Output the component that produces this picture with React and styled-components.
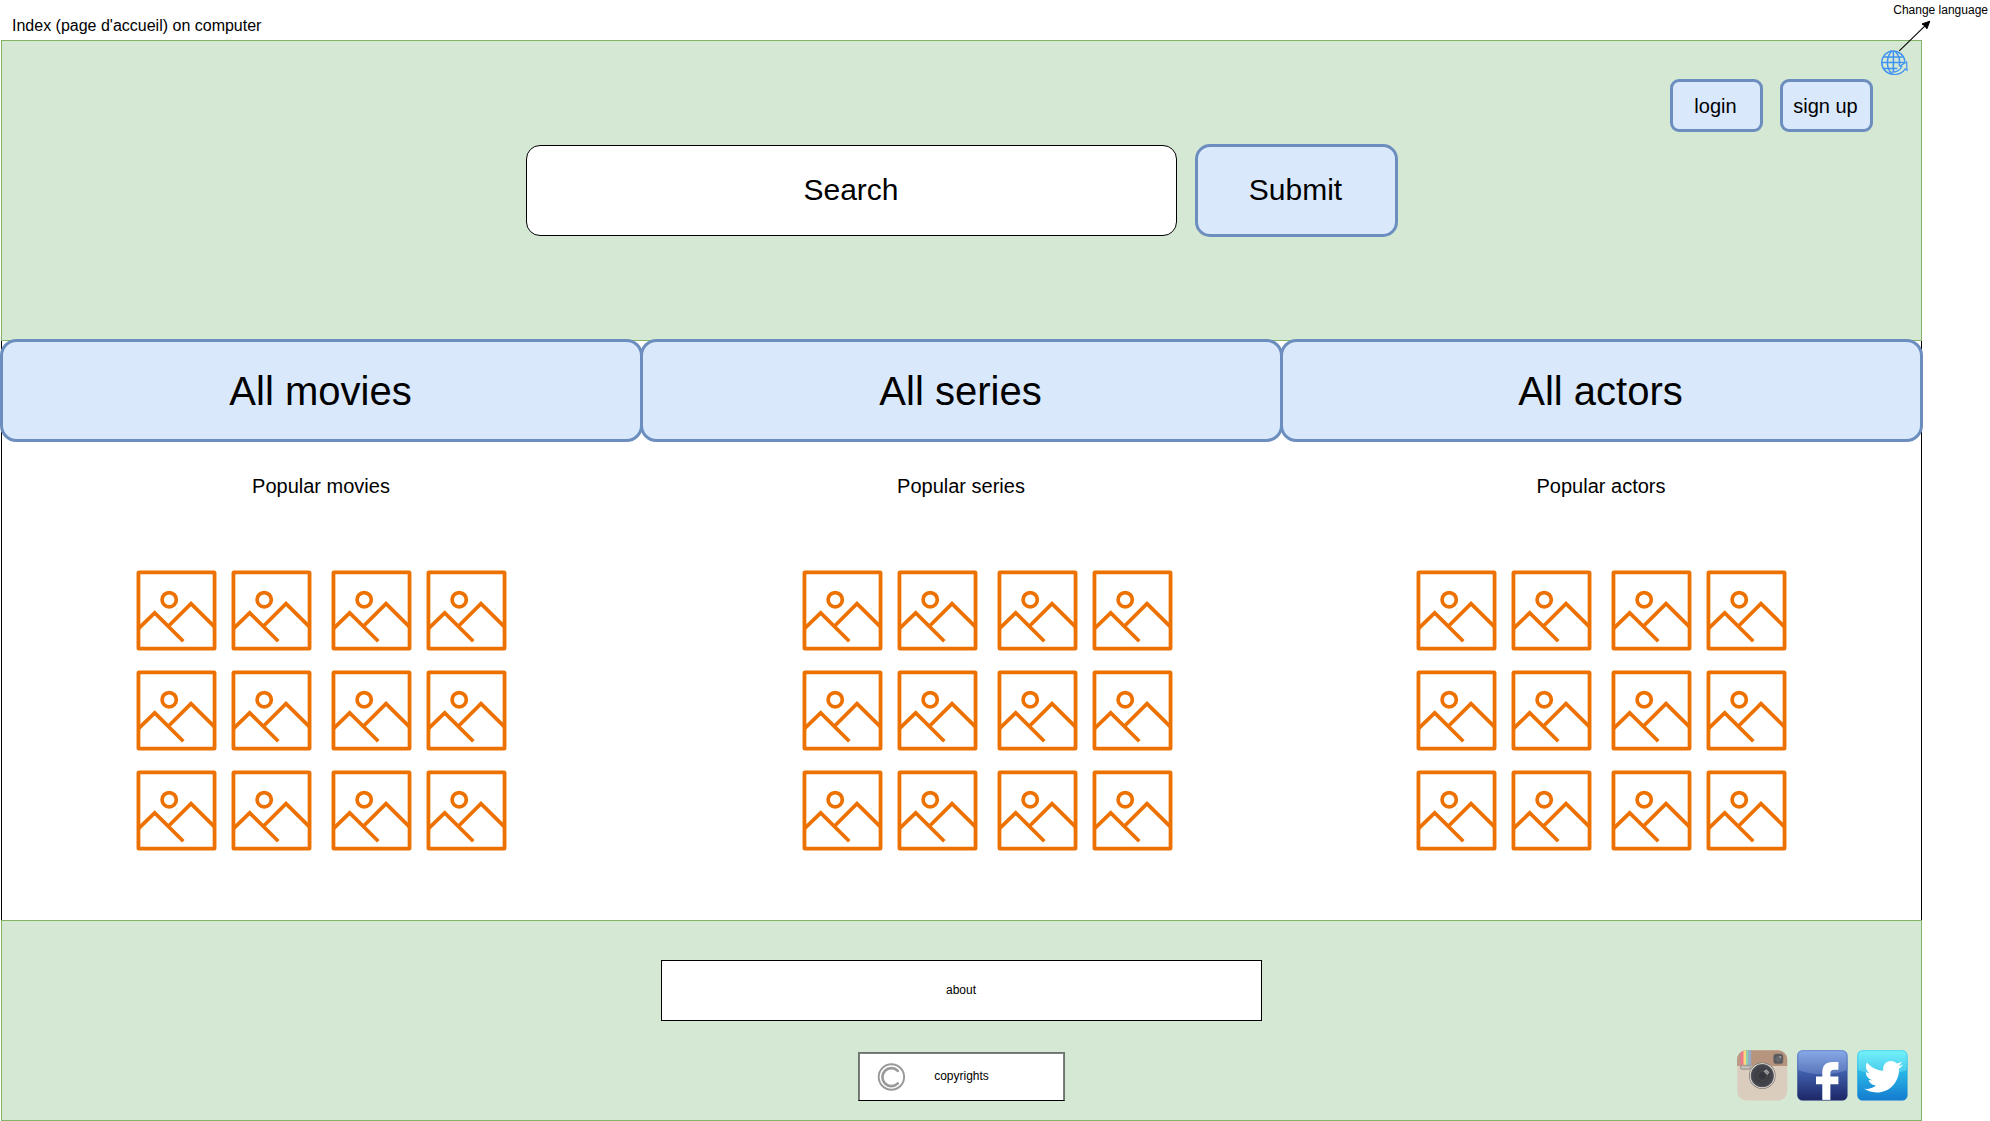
import React from "react";
import styled, { createGlobalStyle } from "styled-components";

const GlobalStyle = createGlobalStyle`
  *, *::before, *::after { box-sizing: border-box; }
  body {
    margin: 0;
    background: #ffffff;
    color: #000000;
    font-family: "Liberation Sans", Arial, Helvetica, sans-serif;
    overflow: hidden;
  }
  svg { display: block; flex: none; }
`;

const Page = styled.div`
  position: relative;
  width: 1990px;
  height: 1121px;
  overflow: hidden;
`;

const Caption = styled.div`
  display: flex;
  justify-content: space-between;
  height: 40px;
  padding: 0 2px 0 12px;
`;

const PageTitle = styled.div`
  padding-top: 16px;
  font-size: 16px;
  line-height: 20px;
`;

const Note = styled.div`
  padding-top: 3px;
  font-size: 12px;
  line-height: 14px;
`;

const NoteArrow = styled.svg`
  position: absolute;
  left: 1895px;
  top: 18px;
`;

const Band = styled.div`
  width: 1921px;
  height: ${(p) => p.$height}px;
  margin-left: 1px;
  display: flex;
  flex-direction: column;
  background: #d5e8d4;
  border: 1px solid #82b366;
`;

const LanguageRow = styled.div`
  display: flex;
  justify-content: flex-end;
  padding: 9px 13px 0 0;
`;

const AccountRow = styled.div`
  display: flex;
  justify-content: flex-end;
  gap: 17px;
  padding: 3px 48px 0 0;
`;

const SearchRow = styled.div`
  display: flex;
  align-items: center;
  gap: 18px;
  padding: 12px 0 0 524px;
`;

const Button = styled.button`
  display: flex;
  flex: none;
  align-items: center;
  justify-content: center;
  width: ${(p) => p.$width}px;
  height: ${(p) => p.$height}px;
  padding: 0 2px ${(p) => p.$lift || 0}px 0;
  border: 3px solid #6c8ebf;
  border-radius: ${(p) => p.$radius}px;
  background: #dae8fc;
  color: #000000;
  font-family: inherit;
  font-size: ${(p) => p.$size}px;
  line-height: 1.2;
`;

const SearchBox = styled.div`
  display: flex;
  align-items: center;
  justify-content: center;
  width: 651px;
  height: 91px;
  padding: 0 1px 2px 0;
  border: 1px solid #000000;
  border-radius: 14px;
  background: #ffffff;
  font-size: 30px;
`;

const Body = styled.div`
  display: flex;
  flex-direction: column;
  width: 1921px;
  height: 579px;
  margin-left: 1px;
  border: solid #000000;
  border-width: 0 1px;
`;

const Tabs = styled.div`
  display: flex;
  margin: -2px -2px 0;
  & > * + * { margin-left: -3px; }
`;

const Columns = styled.div`
  display: flex;
  margin-left: -1px;
`;

const Column = styled.div`
  flex: none;
  width: 640px;
  padding-top: 32px;
`;

const ColumnTitle = styled.div`
  text-align: center;
  font-size: 20px;
  line-height: 24px;
`;

const Gallery = styled.div`
  display: flex;
  flex-direction: column;
  gap: 19px;
  padding: 72px 0 0 ${(p) => p.$indent}px;
`;

const GalleryRow = styled.div`
  display: flex;
  gap: 19px;
`;

const Pair = styled.div`
  display: flex;
  gap: 14px;
`;

const FooterMain = styled.div`
  display: flex;
  justify-content: center;
  padding-top: 39px;
`;

const About = styled.div`
  display: flex;
  align-items: center;
  justify-content: center;
  width: 601px;
  height: 61px;
  padding: 0 1px 2px 0;
  border: 1px solid #000000;
  background: #ffffff;
  font-size: 12px;
`;

const FooterBottom = styled.div`
  display: grid;
  grid-template-columns: 1fr 207px 1fr;
  padding-top: 29px;
`;

const Copyright = styled.div`
  display: grid;
  grid-template-columns: 1fr auto 1fr;
  align-items: center;
  grid-column: 2;
  width: 207px;
  height: 49px;
  margin-top: 2px;
  border: 1px solid #6a746a;
  border-bottom-color: #000000;
  background: #ffffff;
  box-shadow: inset 0 1px #7f7f7f, inset 1px 0 #7f7f7f, inset -1px 0 #7f7f7f;
  font-size: 12px;
  & > svg { margin-left: 18px; }
  & > span { padding-bottom: 2px; }
`;

const Social = styled.div`
  display: flex;
  justify-content: flex-end;
  gap: 9px;
  padding-right: 13px;
`;

const PictureIcon = () => (
  <svg width="81" height="81" viewBox="-0.5 -0.5 81 81" fill="none" stroke="#ed7100">
    <rect x="1.95" y="1.95" width="76.1" height="76.1" rx="0.6" strokeWidth="3.8" />
    <circle cx="32.7" cy="29.2" r="7.1" strokeWidth="3.7" />
    <path d="M2.2 57.8 L18.2 42.4 L46.8 70.7" strokeWidth="3.7" />
    <path d="M32.6 55 L54.5 33.2 L78 56.4" strokeWidth="3.7" />
  </svg>
);

const GlobeIcon = () => (
  <svg width="27" height="26" viewBox="0 0 27 26" fill="none" stroke="#3f92f2" strokeWidth="1.5">
    <path d="M23.9 11.6 A11.6 11.6 0 1 0 12.5 24.2" />
    <path d="M12.4 1 V21.8 M10.8 1 C4.9 7.2 4.9 17.8 10.9 24 M14 1 C17.6 4.8 19.2 10.6 18.2 15.5" />
    <path d="M3.1 7 H21.6 M0.9 12.6 H23.8 M3 18.4 H16.4" />
    <path d="M10.6 22.2 C15.4 22.2 19.2 20 20.8 16.4 L18.7 15.9 L25.6 11.9 L26 20.2 L24.2 18.9 C21.6 22.8 17.2 25 11.8 24.4" strokeWidth="1.2" />
  </svg>
);

const CopyrightIcon = () => (
  <svg width="28" height="28" viewBox="-0.4 0 28 28" fill="none" stroke="#999999">
    <circle cx="14" cy="14" r="12.7" strokeWidth="1.9" />
    <path d="M20.4 7.8 A9 9 0 1 0 20.4 20.4" strokeWidth="2.6" strokeLinecap="round" />
  </svg>
);

const InstagramIcon = () => (
  <svg width="51" height="51" viewBox="0 0 51 51">
    <defs>
      <clipPath id="igShape"><rect x="0.2" y="0.3" width="50" height="50.2" rx="9" /></clipPath>
      <radialGradient id="igLens">
        <stop offset="0" stopColor="#30313a" />
        <stop offset="0.45" stopColor="#3b3c43" />
        <stop offset="1" stopColor="#46474f" />
      </radialGradient>
    </defs>
    <g clipPath="url(#igShape)">
      <rect width="51" height="51" fill="#dacdbe" />
      <rect width="51" height="16" fill="#b6947e" />
      <rect x="0" width="3.8" height="16" fill="#bd9a87" />
      <rect x="3.8" width="2.7" height="16" fill="#f4768c" />
      <rect x="6.5" width="2.5" height="16" fill="#f9d77c" />
      <rect x="9" width="2.5" height="16" fill="#8fd0b0" />
      <rect x="11.5" width="2.6" height="16" fill="#93abd0" />
    </g>
    <rect x="3.5" y="15.3" width="10.5" height="4" rx="1.4" fill="#b6b1a9" stroke="#918c86" strokeWidth="0.7" />
    <path d="M5.4 17.3 H12" stroke="#dedbd5" strokeWidth="1" strokeDasharray="1.3 0.8" />
    <rect x="36.7" y="4" width="9.3" height="9.8" rx="2.2" fill="#55575b" stroke="#7c726b" strokeWidth="0.8" />
    <circle cx="41.3" cy="9" r="3" fill="#66686b" />
    <path d="M41.8 6.2 L44.2 6.2 L44 8.6 Z" fill="#b2b4b6" />
    <circle cx="25.3" cy="25.7" r="13.3" fill="#7d7971" />
    <circle cx="25.3" cy="25.7" r="12.5" fill="#eeeae4" />
    <circle cx="25.3" cy="25.7" r="11.6" fill="#55545a" />
    <circle cx="25.3" cy="25.7" r="10.8" fill="url(#igLens)" />
    <circle cx="25.3" cy="25.7" r="4.8" fill="none" stroke="#55504e" strokeWidth="0.7" />
    <path d="M26.6 21.3 L29.2 19.2 L32.4 22.2 L30.3 25 Z" fill="#a6a8ac" />
    <path d="M28.6 21.2 L31.2 23.6" stroke="#56575d" strokeWidth="0.8" />
  </svg>
);

const FacebookIcon = () => (
  <svg width="51" height="51" viewBox="0 0 51 51">
    <defs>
      <linearGradient id="fbBase" x2="0" y2="1">
        <stop offset="0" stopColor="#5a80cb" />
        <stop offset="0.5" stopColor="#3c58a4" />
        <stop offset="1" stopColor="#1b2564" />
      </linearGradient>
      <linearGradient id="fbGloss" x2="0" y2="1">
        <stop offset="0" stopColor="#89abe8" />
        <stop offset="1" stopColor="#5875ba" />
      </linearGradient>
      <clipPath id="fbShape"><rect x="0.3" y="0.3" width="50.2" height="50.2" rx="5.2" /></clipPath>
    </defs>
    <g clipPath="url(#fbShape)">
      <rect width="51" height="51" fill="url(#fbBase)" />
      <path d="M0 0 H51 V20 Q25.5 28.5 0 20 Z" fill="url(#fbGloss)" />
      <path d="M25.3 50 V34.3 H19 V26.4 H25.3 V22.4 C25.3 15.6 28.8 12 35.2 12 H41.4 V19.8 H37 C34.3 19.8 33.4 21 33.4 23.5 V26.4 H41.4 V34.3 H33.4 V50 Z" fill="#ffffff" />
      <rect x="0.7" y="0.7" width="49.4" height="49.4" rx="5" fill="none" stroke="#2c4a96" strokeOpacity="0.35" />
    </g>
  </svg>
);

const TwitterIcon = () => (
  <svg width="51" height="51" viewBox="0 0 51 51">
    <defs>
      <linearGradient id="twBase" x2="0" y2="1">
        <stop offset="0" stopColor="#4cd8f4" />
        <stop offset="0.45" stopColor="#27b5e5" />
        <stop offset="1" stopColor="#1479cf" />
      </linearGradient>
      <linearGradient id="twGloss" x2="0" y2="1">
        <stop offset="0" stopColor="#74f2fb" />
        <stop offset="1" stopColor="#45c7ea" />
      </linearGradient>
      <clipPath id="twShape"><rect x="0.3" y="0.3" width="50.2" height="50.2" rx="5.2" /></clipPath>
    </defs>
    <g clipPath="url(#twShape)">
      <rect width="51" height="51" fill="url(#twBase)" />
      <path d="M0 0 H51 V20 Q25.5 28.5 0 20 Z" fill="url(#twGloss)" />
      <rect x="0.7" y="0.7" width="49.4" height="49.4" rx="5" fill="none" stroke="#159bd5" strokeOpacity="0.35" />
    </g>
    <path
      transform="translate(7.3 7.4) scale(0.0755)"
      fill="#ffffff"
      d="M459.37 151.716c.325 4.548.325 9.097.325 13.645 0 138.72-105.583 298.558-298.558 298.558-59.452 0-114.68-17.219-161.137-47.106 8.447.974 16.568 1.299 25.34 1.299 49.055 0 94.213-16.568 130.274-44.832-46.132-.975-84.792-31.188-98.112-72.772 6.498.974 12.995 1.624 19.818 1.624 9.421 0 18.843-1.3 27.614-3.573-48.081-9.747-84.143-51.98-84.143-102.985v-1.299c13.969 7.797 30.214 12.67 47.431 13.319-28.264-18.843-46.781-51.005-46.781-87.391 0-19.492 5.197-37.36 14.294-52.954 51.655 63.675 129.3 105.258 216.365 109.807-1.624-7.797-2.599-15.918-2.599-24.04 0-57.828 46.782-104.934 104.934-104.934 30.213 0 57.502 12.67 76.67 33.137 23.715-4.548 46.456-13.32 66.599-25.34-7.798 24.366-24.366 44.833-46.132 57.827 21.117-2.273 41.584-8.122 60.426-16.243-14.292 20.791-32.161 39.308-52.628 54.253z"
    />
  </svg>
);

const sections = [
  { tab: "All movies", title: "Popular movies", indent: 135 },
  { tab: "All series", title: "Popular series", indent: 161 },
  { tab: "All actors", title: "Popular actors", indent: 135 },
];

export default function App() {
  return (
    <Page>
      <GlobalStyle />
      <Caption>
        <PageTitle>Index (page d'accueil) on computer</PageTitle>
        <Note>Change language</Note>
      </Caption>

      <Band as="header" $height={301}>
        <LanguageRow><GlobeIcon /></LanguageRow>
        <AccountRow>
          <Button $width={93} $height={53} $radius={9} $size={20}>login</Button>
          <Button $width={93} $height={53} $radius={9} $size={20}>sign up</Button>
        </AccountRow>
        <SearchRow>
          <SearchBox>Search</SearchBox>
          <Button $width={203} $height={93} $radius={15} $size={30} $lift={2}>Submit</Button>
        </SearchRow>
      </Band>

      <Body>
        <Tabs>
          {sections.map((s) => (
            <Button key={s.tab} $width={643} $height={103} $radius={16.5} $size={40}>{s.tab}</Button>
          ))}
        </Tabs>
        <Columns>
          {sections.map((s) => (
            <Column key={s.title}>
              <ColumnTitle>{s.title}</ColumnTitle>
              <Gallery $indent={s.indent}>
                {[0, 1, 2].map((row) => (
                  <GalleryRow key={row}>
                    <Pair><PictureIcon /><PictureIcon /></Pair>
                    <Pair><PictureIcon /><PictureIcon /></Pair>
                  </GalleryRow>
                ))}
              </Gallery>
            </Column>
          ))}
        </Columns>
      </Body>

      <Band as="footer" $height={201}>
        <FooterMain><About>about</About></FooterMain>
        <FooterBottom>
          <Copyright>
            <CopyrightIcon />
            <span>copyrights</span>
          </Copyright>
          <Social>
            <InstagramIcon />
            <FacebookIcon />
            <TwitterIcon />
          </Social>
        </FooterBottom>
      </Band>

      <NoteArrow width="40" height="36" viewBox="1895 18 40 36">
        <path d="M1899.3 50.8 L1925 25.9" stroke="#000000" strokeWidth="1.1" />
        <path d="M1929.8 21.2 L1926.9 28.8 L1924.9 25.9 L1922 23.9 Z" fill="#000000" stroke="#000000" strokeWidth="1" />
      </NoteArrow>
    </Page>
  );
}
